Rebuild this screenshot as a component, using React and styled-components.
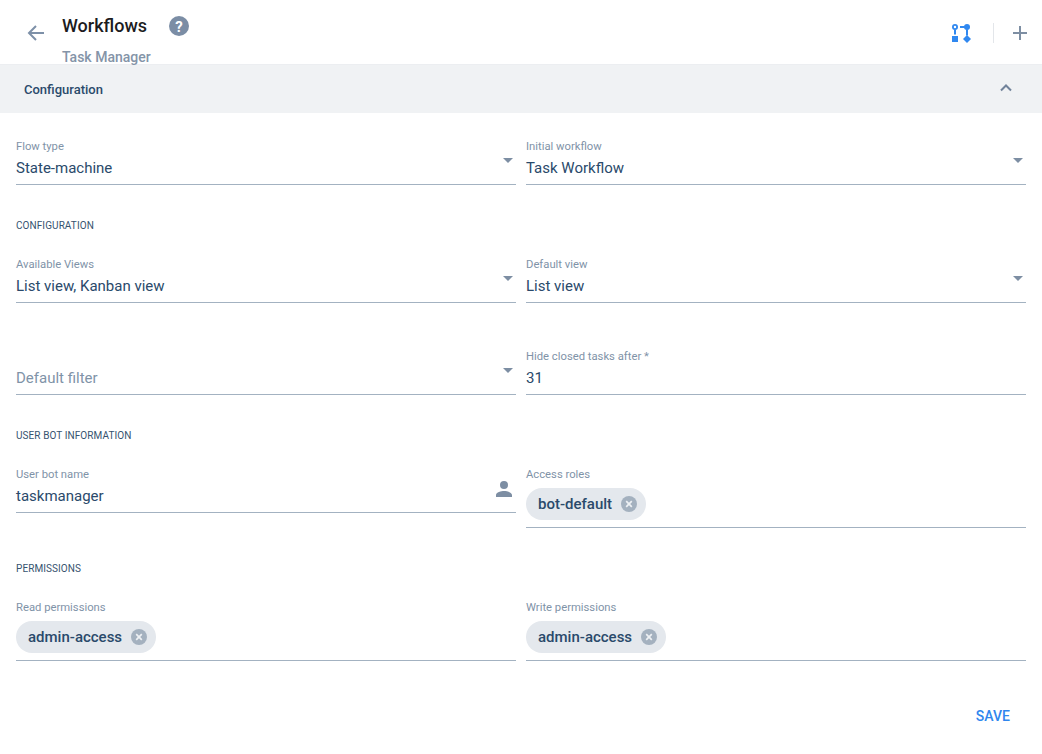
import React from "react";
import styled, { createGlobalStyle } from "styled-components";

const Global = createGlobalStyle`
  html, body { margin: 0; padding: 0; background: #fff; }
  body { font-family: Roboto, "Liberation Sans", sans-serif; }
`;
const Page = styled.div`width: 1042px; height: 754px; overflow: hidden; display: flex; flex-direction: column;`;
const Header = styled.header`height: 65px; flex: none; display: flex; align-items: flex-start; box-sizing: border-box; border-bottom: 1px solid #eceef1; position: relative;`;
const BackButton = styled.div`width: 24px; height: 24px; margin: 21px 14px 0 24px; color: #7d90a8; display: flex;`;
const Titles = styled.div`display: flex; flex-direction: column; padding-top: 15px;`;
const TitleRow = styled.div`display: flex; align-items: center; height: 22px;`;
const Title = styled.h1`margin: 0; font-size: 18px; line-height: 22px; font-weight: 500; color: #1c1c1e;`;
const Help = styled.div`width: 24px; height: 24px; margin-left: 20px; display: flex;`;
const Subtitle = styled.div`font-size: 14px; line-height: 16px; font-weight: 500; color: #8494a8; margin-top: 12px;`;
const HeaderActions = styled.div`margin-left: auto; display: flex; align-items: center; height: 24px; margin-top: 21px; padding-right: 10px;`;
const ActionIcon = styled.div`width: 24px; height: 24px; display: flex;`;
const Divider = styled.div`width: 1px; height: 20px; background: #e3e6ea; margin: 0 14px 0 19px;`;
const Panel = styled.div`height: 48px; flex: none; background: #f0f2f4; display: flex; align-items: center; justify-content: space-between; padding: 0 24px; box-sizing: border-box;`;
const PanelTitle = styled.div`font-size: 13px; font-weight: 500; color: #2a4a6b;`;
const Chevron = styled.div`width: 16px; height: 16px; display: flex; margin-right: 4px; margin-top: -3px;`;
const Form = styled.div`padding: 27px 16px 0; display: flex; flex-direction: column;`;
const Row = styled.div`display: grid; grid-template-columns: 500px 500px; column-gap: 10px; align-items: start; margin-top: ${p => p.$top || 0}px;`;
const Heading = styled.div`font-size: 10px; line-height: 12px; letter-spacing: 0.08px; color: #36536f; text-transform: uppercase; margin-top: 35px;`;
const Field = styled.div`display: flex; flex-direction: column;`;
const Label = styled.div`font-size: 11.25px; line-height: 14px; height: 14px; color: #7f93a8;`;
const Control = styled.div`height: 28px; padding-bottom: 2px; border-bottom: 1px solid #a3b2c1; display: flex; align-items: center; justify-content: space-between; font-size: 15px; color: ${p => p.$placeholder ? "#7f93a8" : "#2a4a6b"};`;
const ChipControl = styled.div`padding: 6px 0 7px; border-bottom: 1px solid #a3b2c1; display: flex;`;
const Chip = styled.div`height: 32px; border-radius: 16px; background: #e4e8ed; display: flex; align-items: center; padding: 0 9px 0 12px; gap: 9px; font-size: 15px; font-weight: 500; color: #2a4a6b;`;
const Caret = styled.div`width: 0; height: 0; border-left: 5.5px solid transparent; border-right: 5.5px solid transparent; border-top: 5.5px solid #7d8ea3; margin: 0 3px 15px 0;`;
const UserIcon = styled.svg`margin: 0 0 14px 0; fill: #7d8ea3;`;
const Footer = styled.div`display: flex; justify-content: flex-end; padding: 47px 16px 0 0;`;
const Save = styled.button`border: 0; background: none; padding: 0; font: 500 14px Roboto, sans-serif; line-height: 16px; color: #2f86ee;`;

const Remove = () => (
  <svg width="16" height="16" viewBox="0 0 16 16">
    <circle cx="8" cy="8" r="8" fill="#a4b1bf" />
    <path d="M5.2 5.2l5.6 5.6M10.8 5.2l-5.6 5.6" stroke="#eef1f4" strokeWidth="1.7" />
  </svg>
);
const Select = ({ label, value, placeholder }) => (
  <Field>
    <Label>{label}</Label>
    <Control $placeholder={placeholder}>{value}<Caret /></Control>
  </Field>
);
const Input = ({ label, value, children }) => (
  <Field>
    <Label>{label}</Label>
    <Control>{value}{children}</Control>
  </Field>
);
const Chips = ({ label, value }) => (
  <Field>
    <Label>{label}</Label>
    <ChipControl><Chip>{value}<Remove /></Chip></ChipControl>
  </Field>
);

export default function App() {
  return (
    <Page>
      <Global />
      <Header>
        <BackButton>
          <svg width="24" height="24" viewBox="0 0 24 24" fill="none" stroke="currentColor" strokeWidth="2">
            <path d="M20 12H5M12 5l-7 7 7 7" />
          </svg>
        </BackButton>
        <Titles>
          <TitleRow>
            <Title>Workflows</Title>
            <Help>
              <svg width="24" height="24" viewBox="0 0 24 24">
                <circle cx="12" cy="12" r="10" fill="#7b8da5" />
                <text x="12" y="17.5" textAnchor="middle" fontSize="15" fontWeight="700" fontFamily="Roboto" fill="#fff">?</text>
              </svg>
            </Help>
          </TitleRow>
          <Subtitle>Task Manager</Subtitle>
        </Titles>
        <HeaderActions>
          <ActionIcon>
            <svg width="24" height="24" viewBox="0 0 24 24" fill="#3088f0" stroke="none">
              <circle cx="5" cy="6" r="2.1" fill="none" stroke="#3088f0" strokeWidth="1.8" />
              <rect x="4" y="8.5" width="2" height="5" />
              <rect x="2" y="15" width="6" height="6" />
              <rect x="10" y="5" width="6" height="2" />
              <circle cx="17" cy="6" r="3" />
              <rect x="16" y="8.5" width="2" height="6" />
              <path d="M17 14l4 4-4 4-4-4z" />
            </svg>
          </ActionIcon>
          <Divider />
          <ActionIcon>
            <svg width="24" height="24" viewBox="0 0 24 24" fill="none" stroke="#7d8ea3" strokeWidth="2">
              <path d="M12 5v14M5 12h14" />
            </svg>
          </ActionIcon>
        </HeaderActions>
      </Header>
      <Panel>
        <PanelTitle>Configuration</PanelTitle>
        <Chevron>
          <svg width="16" height="16" viewBox="0 0 16 16" fill="none" stroke="#71839a" strokeWidth="2">
            <path d="M3 10.5l5-5 5 5" />
          </svg>
        </Chevron>
      </Panel>
      <Form>
        <Row>
          <Select label="Flow type" value="State-machine" />
          <Select label="Initial workflow" value="Task Workflow" />
        </Row>
        <Heading>Configuration</Heading>
        <Row $top={26}>
          <Select label="Available Views" value="List view, Kanban view" />
          <Select label="Default view" value="List view" />
        </Row>
        <Row $top={47}>
          <Select label="" value="Default filter" placeholder />
          <Input label="Hide closed tasks after *" value="31" />
        </Row>
        <Heading>User bot information</Heading>
        <Row $top={26}>
          <Input label="User bot name" value="taskmanager">
            <UserIcon width="24" height="24" viewBox="0 0 24 24">
              <path d="M12 12a4 4 0 1 0 0-8 4 4 0 0 0 0 8zm0 2c-2.7 0-8 1.3-8 4v2h16v-2c0-2.7-5.3-4-8-4z" />
            </UserIcon>
          </Input>
          <Chips label="Access roles" value="bot-default" />
        </Row>
        <Heading>Permissions</Heading>
        <Row $top={26}>
          <Chips label="Read permissions" value="admin-access" />
          <Chips label="Write permissions" value="admin-access" />
        </Row>
        <Footer><Save>SAVE</Save></Footer>
      </Form>
    </Page>
  );
}
